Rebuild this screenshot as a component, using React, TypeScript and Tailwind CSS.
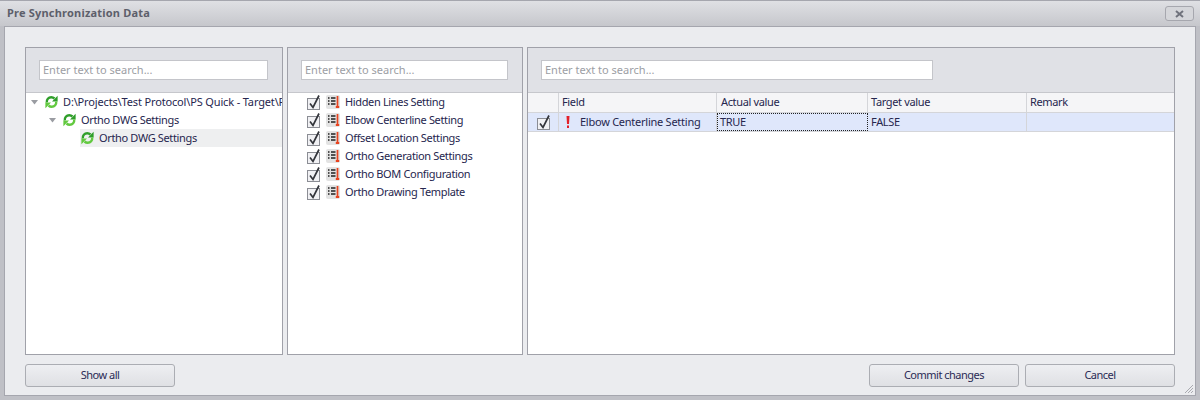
const font = "font-['Noto_Sans','Liberation_Sans',sans-serif]";

const settings = [
  "Hidden Lines Setting",
  "Elbow Centerline Setting",
  "Offset Location Settings",
  "Ortho Generation Settings",
  "Ortho BOM Configuration",
  "Ortho Drawing Template",
];

function SyncIcon() {
  return (
    <svg width="13" height="14" viewBox="0 0 13 14" className="shrink-0">
      <path d="M1.800 7.500C1.400 4.500 3.500 2.200 6.300 2.200c1.200 0 2.300.5 3.200 1.300" fill="none" stroke="#2f9e2a" strokeWidth="2.400" />
      <path d="M12.600 0.800v5.600H7z" fill="#2f9e2a" />
      <path d="M11.200 6.500c.4 3-1.700 5.300-4.500 5.300-1.200 0-2.300-.5-3.200-1.300" fill="none" stroke="#62c93f" strokeWidth="2.400" />
      <path d="M0.400 13.200V7.600H6z" fill="#62c93f" />
    </svg>
  );
}

function Caret() {
  return (
    <svg width="7" height="5" viewBox="0 0 7 5" className="shrink-0">
      <path d="M0 0h7L3.500 4.500z" fill="#9a9ca2" />
    </svg>
  );
}

function CheckBox() {
  return (
    <svg width="14" height="15" viewBox="0 0 14 15" className="shrink-0">
      <rect x="0.500" y="3.500" width="12" height="11" fill="#f1f1f4" stroke="#8b8d94" />
      <path d="M3 8.500l3 4L12 0.500" fill="none" stroke="#33353b" strokeWidth="1.700" />
    </svg>
  );
}

function ListIcon() {
  return (
    <svg width="14" height="14" viewBox="0 0 14 14" className="shrink-0">
      <rect width="14" height="14" rx="2" fill="#e3e3e3" />
      <path d="M2 3h1.500M2 6h1.500M2 9h1.500M5 3h4.500M5 6h4.500M5 9h4.500" stroke="#222" strokeWidth="1.300" />
      <path d="M11.500 1v10" stroke="#e8431f" strokeWidth="1.700" />
      <path d="M9.800 12h3.400" stroke="#e8431f" strokeWidth="2" />
    </svg>
  );
}

function SearchBar({ width }: { width: string }) {
  return (
    <div className="h-[45px] shrink-0 bg-[#e0e1e6] border-b border-[#c6c7cc] px-[13px] pt-[12px]">
      <div className={`${width} h-[20px] bg-white border border-[#c4c5ca] pl-[3px] flex items-center text-[#9c9ea4] tracking-[0px]`}>
        Enter text to search...
      </div>
    </div>
  );
}

function Button({ label }: { label: string }) {
  return (
    <button className="w-[150px] h-[23px] rounded-[3px] border border-[#abadb3] bg-gradient-to-b from-[#eeeff2] to-[#dfe0e4] text-[#2b2b55] tracking-[-0.5px]">
      {label}
    </button>
  );
}

export default function App() {
  return (
    <div className={`${font} w-[1200px] h-[400px] flex flex-col overflow-hidden bg-[#bfc0c6] border-t border-[#a5a6ae] text-[11px] text-[#26264e] tracking-[-0.35px]`}>
      <div className="h-[25px] shrink-0 flex items-center justify-between pl-[7px] pr-[6px] bg-gradient-to-b from-[#dfe0e4] to-[#c6c7cc]">
        <span className="font-bold text-[#5d5f6b] tracking-[0.2px]">Pre Synchronization Data</span>
        <div className="w-[29px] h-[15px] rounded-[3px] border border-[#a6a7ae] bg-[#d5d6da] flex items-center justify-center">
          <svg width="9" height="8" viewBox="0 0 9 8">
            <path d="M1 1l7 6M8 1L1 7" stroke="#70727c" strokeWidth="2" />
          </svg>
        </div>
      </div>

      <div className="flex-1 mx-[4px] mb-[4px] bg-[#ebecef] border border-[#a5a6ae] px-[20px] pt-[20px] flex flex-col relative">
        <div className="h-[308px] flex gap-[4px]">
          <section className="w-[258px] flex flex-col bg-white border border-[#a0a1a9]">
            <SearchBar width="w-[229px]" />
            <div className="flex flex-col overflow-hidden whitespace-nowrap">
              <div className="h-[18px] flex items-center pl-[5px]">
                <Caret />
                <div className="ml-[7px] mr-[5px]"><SyncIcon /></div>
                <span className="tracking-[-0.15px]">D:\Projects\Test Protocol\PS Quick - Target\Project</span>
              </div>
              <div className="h-[18px] flex items-center pl-[23px]">
                <Caret />
                <div className="ml-[7px] mr-[5px]"><SyncIcon /></div>
                <span>Ortho DWG Settings</span>
              </div>
              <div className="h-[18px] ml-[54px] flex items-center pl-[1px] gap-[5px] bg-[#eeeff0]">
                <SyncIcon />
                <span>Ortho DWG Settings</span>
              </div>
            </div>
          </section>

          <section className="w-[236px] flex flex-col bg-white border border-[#a0a1a9]">
            <SearchBar width="w-[207px]" />
            <div className="flex flex-col">
              {settings.map((name) => (
                <div key={name} className="h-[18px] flex items-center pl-[19px] gap-[5px] whitespace-nowrap">
                  <CheckBox />
                  <ListIcon />
                  <span>{name}</span>
                </div>
              ))}
            </div>
          </section>

          <section className="flex-1 flex flex-col bg-white border border-[#a0a1a9]">
            <SearchBar width="w-[392px]" />
            <div className="h-[20px] flex bg-[#f5f5f7] border-b border-[#d4d5d9]">
              <div className="w-[31px] border-r border-[#d4d5d9]" />
              <div className="w-[158px] border-r border-[#d4d5d9] pl-[3px] flex items-center">Field</div>
              <div className="w-[151px] border-r border-[#d4d5d9] pl-[4px] flex items-center">Actual value</div>
              <div className="w-[159px] border-r border-[#d4d5d9] pl-[3px] flex items-center">Target value</div>
              <div className="flex-1 pl-[3px] flex items-center">Remark</div>
            </div>
            <div className="h-[19px] flex bg-[#dfe7fb] border-b border-[#d4d5d9]">
              <div className="w-[31px] border-r border-[#d4d5d9] pl-[9px] flex items-center">
                <CheckBox />
              </div>
              <div className="w-[158px] border-r border-[#d4d5d9] pl-[7px] flex items-center gap-[10px] whitespace-nowrap">
                <svg width="4" height="12" viewBox="0 0 4 12" className="shrink-0">
                  <path d="M0.500 0h3L3 8H1zM1 9.500h2V12H1z" fill="#e3202a" />
                </svg>
                <span className="tracking-[-0.25px]">Elbow Centerline Setting</span>
              </div>
              <div className="w-[151px] border border-dotted border-[#222] pl-[2px] flex items-center">TRUE</div>
              <div className="w-[159px] border-r border-[#d4d5d9] pl-[3px] flex items-center">FALSE</div>
              <div className="flex-1" />
            </div>
          </section>
        </div>

        <div className="flex justify-between mt-[9px]">
          <Button label="Show all" />
          <div className="flex gap-[6px]">
            <Button label="Commit changes" />
            <Button label="Cancel" />
          </div>
        </div>

        <svg width="11" height="11" viewBox="0 0 11 11" className="absolute right-[1px] bottom-[1px]">
          <path d="M10 2L2 10M10 5L5 10M10 8L8 10" stroke="#a9aab0" />
        </svg>
      </div>
    </div>
  );
}
